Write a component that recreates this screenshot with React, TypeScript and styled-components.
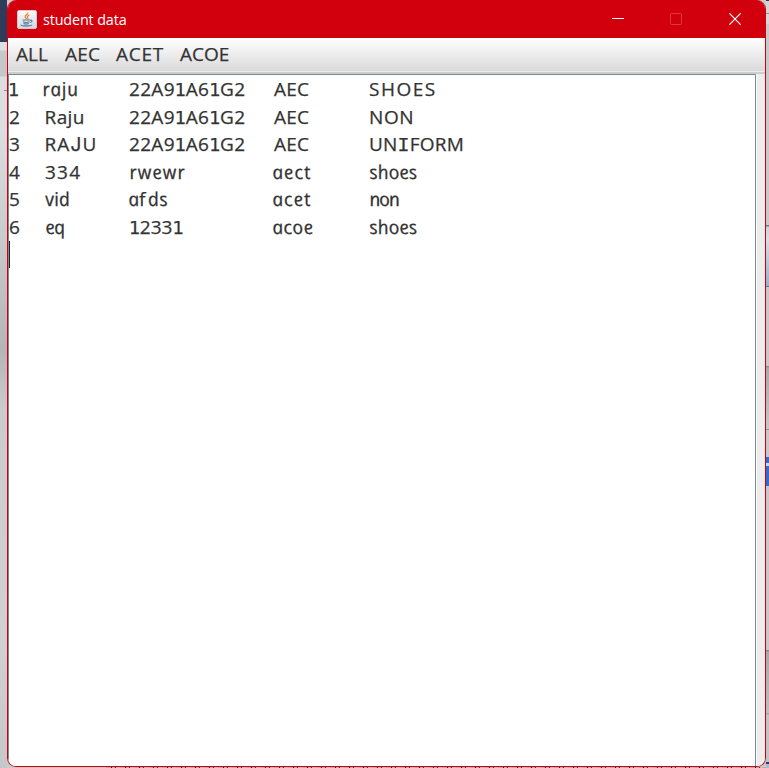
import React from "react";
import styled, { createGlobalStyle } from "styled-components";

const GlobalStyle = createGlobalStyle`
  *, *::before, *::after { box-sizing: border-box; }
  html, body { margin: 0; padding: 0; overflow: hidden; }
`;

const Desktop = styled.div`
  position: relative;
  width: 769px;
  height: 768px;
  padding: 0 3px 1px 7px;
  overflow: hidden;
  background:
    linear-gradient(#8a8a8c, #8a8a8c) 4px 90px / 3px 1px no-repeat,
    linear-gradient(#2e3b59 0 42px, #dedfe1 42px 50px, #c6c7c9 51px 76px, #dcdde0 77px 130px, #c9cacb 240px, #b4b5b6 350px, #c9cbcd 410px, #d0d1d3 640px, #c6c7c9) 0 0 / 7px 768px no-repeat,
    repeating-linear-gradient(90deg, #b9a9ae 0 5px, #26215c 5px 6px, #b9a9ae 6px 9px, #413162 9px 10px, #c6b5b8 10px 14px) 106px 767px / 663px 1px no-repeat,
    #cbcbcc;
`;

const RightEdge = styled.div`
  position: absolute;
  top: 0;
  right: 0;
  width: 3px;
  height: 768px;
  background: linear-gradient(
    #38373c 0 1px, #d5d3d5 1px 13px, #929093 13px 14px, #d7d5d7 14px 24px, #c9c8ca 24px 225px,
    #697990 225px 226px, #ced2dc 227px, #d9dce2 240px, #9cafc9 286px,
    #667382 286px 287px, #c9c7c9 287px 366px, #929294 366px 367px, #aaa9ac 368px, #c7c6c8 429px,
    #929294 429px 430px, #c9c7c9 430px 457px, #386ac7 457px 463px, #c5d8f7 463px 466px, #386ac7 466px 486px,
    #c9c7c9 486px 650px, #8a8c93 650px 651px, #a9a9ab 652px, #bfbec0 713px, #a9a9ab 713px 714px, #c4c3c5 715px 762px, #27366e 762px 764px, #b8b8cc 764px
  );
`;

const Window = styled.main`
  position: relative;
  display: flex;
  flex-direction: column;
  width: 759px;
  height: 767px;
  border: 1px solid #cf000d;
  border-top: 0;
  border-radius: 9px;
  overflow: hidden;
  background: #fff;
`;

const TitleBar = styled.header`
  display: flex;
  align-items: center;
  flex: 0 0 38px;
  height: 38px;
  min-height: 0;
  padding-left: 9px;
  background: #d2000d;
  color: #fff;
`;

const Title = styled.h1`
  flex: 1;
  margin: 0 0 0 6px;
  font: 400 14.4px/37px "Open Sans", sans-serif;
  letter-spacing: -0.15px;
  padding-top: 1px;
`;

const Controls = styled.div`
  display: flex;
  height: 38px;
  margin-right: 1px;
`;

const ControlButton = styled.button<{ $dim?: boolean }>`
  display: grid;
  place-items: center;
  width: 58.5px;
  height: 38px;
  padding: 0;
  border: 0;
  background: none;
  color: ${(p) => (p.$dim ? "#e03643" : "#fff")};
`;

const MenuBar = styled.nav`
  display: flex;
  flex: 0 0 36px;
  gap: 16px;
  padding-left: 8px;
  background:
    linear-gradient(#ededed, #ededed) 0 33px / 100% 1px no-repeat,
    linear-gradient(#cccccc, #cccccc) 0 34px / 100% 2px no-repeat,
    linear-gradient(#ffffff, #dadada 33px);
`;

const MenuItem = styled.div<{ $width: number }>`
  width: ${(p) => p.$width}px;
  line-height: 33px;
`;

const Body = styled.section`
  display: flex;
  flex: 1;
  background: linear-gradient(90deg, #fff 0 2px, #ededed 2px) right / 10px 100% no-repeat;
`;

const TextArea = styled.div`
  width: 748px;
  border: 1px solid #7a8a99;
  border-bottom: 0;
  background: #fff;
`;

const Row = styled.div`
  display: grid;
  grid-template-columns: 36px 84px 144px 96px 1fr;
  height: 27.6px;
  line-height: 29px;
`;

const Script = styled.span<{ $spacing: number; $indent?: number; $cursive?: boolean }>`
  display: inline-block;
  justify-self: start;
  margin-left: ${(p) => p.$indent ?? 0}px;
  color: #333;
  font-family: "Open Sans", sans-serif;
  font-size: 19px;
  font-style: ${(p) => (p.$cursive ? "italic" : "normal")};
  letter-spacing: ${(p) => p.$spacing}px;
  white-space: nowrap;
  -webkit-text-stroke: 0.25px #333;
  transform: ${(p) => (p.$cursive ? "skewX(12deg)" : "none")};
`;

const SlabGlyph = styled.span`
  font-family: "DejaVu Sans", sans-serif;
  font-size: 18px;
  letter-spacing: -0.6px;
`;

const CapitalI = styled.span`
  font-family: "Liberation Mono", monospace;
  font-size: 20px;
`;

const CapitalJ = styled.span`
  font-family: Inter, sans-serif;
`;

const UprightF = styled.span`
  display: inline-block;
  font-style: normal;
  transform: skewX(-12deg);
  line-height: 1;
  margin-right: 1px;
`;

const Caret = styled.div`
  width: 1px;
  height: 27px;
  background: #222;
`;

interface Word {
  text: string;
  spacing?: number;
  indent?: number;
}

function Lettering({ text, spacing = 0, indent }: Word) {
  return (
    <Script $spacing={spacing} $indent={indent} $cursive={/^[a-z]+$/.test(text)}>
      {text.split(/([1IJf])/).map((part, i) => {
        if (part === "1") return <SlabGlyph key={i}>{part}</SlabGlyph>;
        if (part === "I") return <CapitalI key={i}>{part}</CapitalI>;
        if (part === "J") return <CapitalJ key={i}>{part}</CapitalJ>;
        if (part === "f") return <UprightF key={i}>{part}</UprightF>;
        return part;
      })}
    </Script>
  );
}

const menus = [
  { text: "ALL", width: 33, spacing: 0 },
  { text: "AEC", width: 35, spacing: 0.2 },
  { text: "ACET", width: 48, spacing: 0.7 },
  { text: "ACOE", width: 50, spacing: 0 },
];

const rows: Word[][] = [
  [{ text: "1", indent: -1 }, { text: "raju", spacing: 0.6, indent: -3 }, { text: "22A91A61G2", spacing: 0.3 }, { text: "AEC", spacing: 0.2, indent: 1 }, { text: "SHOES", spacing: 1.5 }],
  [{ text: "2" }, { text: "Raju", spacing: 0.4, indent: -0.5 }, { text: "22A91A61G2", spacing: 0.3 }, { text: "AEC", spacing: 0.2, indent: 1 }, { text: "NON", spacing: 0.6 }],
  [{ text: "3" }, { text: "RAJU", spacing: 1.1, indent: -0.5 }, { text: "22A91A61G2", spacing: 0.3 }, { text: "AEC", spacing: 0.2, indent: 1 }, { text: "UNIFORM", spacing: 0.2 }],
  [{ text: "4" }, { text: "334", spacing: 1.2 }, { text: "rwewr", spacing: 1, indent: -0.5 }, { text: "aect", spacing: 1, indent: -1 }, { text: "shoes", spacing: 0.1 }],
  [{ text: "5" }, { text: "vid", spacing: 0 }, { text: "afds", spacing: 0.7, indent: -1 }, { text: "acet", spacing: 1, indent: -1 }, { text: "non", spacing: -1, indent: -0.5 }],
  [{ text: "6" }, { text: "eq", spacing: -0.5 }, { text: "12331", spacing: 0 }, { text: "acoe", spacing: 0.4, indent: -1 }, { text: "shoes", spacing: 0.1 }],
];

function JavaIcon() {
  return (
    <svg width="20" height="19" viewBox="0 0 20 19" fill="none">
      <defs>
        <linearGradient id="tile" x1="0" y1="0" x2="0" y2="1">
          <stop stopColor="#fbfbfb" />
          <stop offset="1" stopColor="#cfd8df" />
        </linearGradient>
      </defs>
      <rect x=".5" y=".5" width="19" height="18" rx="1.5" fill="url(#tile)" stroke="#d7c9cb" />
      <path d="M10.8 2.6c.8 2-3.5 2.600-2.600 4.500.3.800 1 1.300 1.300 2M12.300 5.200c-1.600.8-2.700 1.500-1.600 2.700.5.600.2 1-.1 1.300" stroke="#e98b35" strokeWidth="1.3" />
      <path d="M5.500 10h7.500M6 11.800c1.500.6 5 .6 6.500 0M6.500 13.500c1.500.5 4 .5 5.300 0M13 10.200c2.800-.6 2.500 1.900.2 2.300M4 14.700c0 1.600 9.500 1.600 11 .1" stroke="#54779a" strokeWidth="1.1" />
    </svg>
  );
}

export default function App() {
  return (
    <Desktop>
      <GlobalStyle />
      <RightEdge />
      <Window>
        <TitleBar>
          <JavaIcon />
          <Title>student data</Title>
          <Controls>
            <ControlButton aria-label="Minimize">
              <svg width="12" height="12"><path d="M0 5.500h12" stroke="currentColor" /></svg>
            </ControlButton>
            <ControlButton aria-label="Maximize" $dim disabled>
              <svg width="12" height="12"><rect x=".5" y=".5" width="11" height="11" rx="1" fill="none" stroke="currentColor" /></svg>
            </ControlButton>
            <ControlButton aria-label="Close">
              <svg width="12" height="12"><path d="m.3.300 11.400 11.400m0-11.400L.3 11.700" stroke="currentColor" strokeWidth="1.200" /></svg>
            </ControlButton>
          </Controls>
        </TitleBar>
        <MenuBar>
          {menus.map((m) => (
            <MenuItem key={m.text} $width={m.width}>
              <Lettering text={m.text} spacing={m.spacing} />
            </MenuItem>
          ))}
        </MenuBar>
        <Body>
          <TextArea>
            {rows.map((row, i) => (
              <Row key={i}>
                {row.map((word, j) => (
                  <Lettering key={j} {...word} />
                ))}
              </Row>
            ))}
            <Caret />
          </TextArea>
        </Body>
      </Window>
    </Desktop>
  );
}
